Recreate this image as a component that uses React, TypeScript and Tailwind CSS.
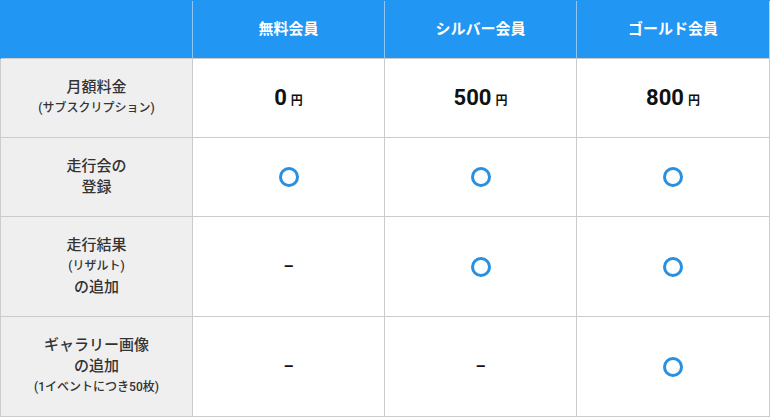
import React from "react";

const font = { fontFamily: 'Roboto, "Noto Sans CJK JP", sans-serif' };

function Circle() {
  return <div className="w-[20px] h-[20px] rounded-full border-[3px] border-[#2790e3]" />;
}

function Dash() {
  return <span className="text-[16px] font-bold text-[#111] leading-none">–</span>;
}

function Price({ v }: { v: string }) {
  return (
    <div className="flex items-baseline font-bold text-[#111]">
      <span className="text-[22px] leading-none">{v}</span>
      <span className="text-[12px] leading-none ml-[4px]">円</span>
    </div>
  );
}

type Row = { h: string; label: React.ReactNode; cells: React.ReactNode[] };

export default function App() {
  const rows: Row[] = [
    {
      h: "h-[79px]",
      label: (
        <>
          <div className="text-[15px]">月額料金</div>
          <div className="text-[12px]">(サブスクリプション)</div>
        </>
      ),
      cells: [<Price v="0" />, <Price v="500" />, <Price v="800" />],
    },
    {
      h: "h-[79px]",
      label: (
        <>
          <div className="text-[15px]">走行会の</div>
          <div className="text-[15px]">登録</div>
        </>
      ),
      cells: [<Circle />, <Circle />, <Circle />],
    },
    {
      h: "h-[100px]",
      label: (
        <>
          <div className="text-[15px]">走行結果</div>
          <div className="text-[12px]">(リザルト)</div>
          <div className="text-[15px]">の追加</div>
        </>
      ),
      cells: [<Dash />, <Circle />, <Circle />],
    },
    {
      h: "h-[100px]",
      label: (
        <>
          <div className="text-[15px]">ギャラリー画像</div>
          <div className="text-[15px]">の追加</div>
          <div className="text-[12px]">(1イベントにつき50枚)</div>
        </>
      ),
      cells: [<Dash />, <Dash />, <Circle />],
    },
  ];
  const widths = ["w-[192px]", "w-[192px]", "w-[192px]", "w-[193px]"];
  return (
    <div className="w-[770px] bg-white" style={font}>
      <div className="flex border-t border-l border-t-[#2196f3] border-l-[#2196f3] bg-[#2196f3] h-[59px]">
        {["", "無料会員", "シルバー会員", "ゴールド会員"].map((t, i) => (
          <div
            key={i}
            className={`${widths[i]} h-full flex items-center justify-center border-b border-b-[#cccccc] ${i < 3 ? "border-r border-r-[#8ec7f6]" : "border-r border-r-[#cccccc]"} text-white font-bold text-[15px]`}
          >
            {t}
          </div>
        ))}
      </div>
      {rows.map((r, ri) => (
        <div key={ri} className={`flex border-l border-l-[#cccccc] ${r.h}`}>
          <div className={`${widths[0]} h-full bg-[#efefef] border-r border-b border-[#cccccc] flex flex-col items-center justify-center text-[#333] font-medium leading-[21px]`}>
            {r.label}
          </div>
          {r.cells.map((c, ci) => (
            <div key={ci} className={`${widths[ci + 1]} h-full border-r border-b border-[#cccccc] flex items-center justify-center`}>
              {c}
            </div>
          ))}
        </div>
      ))}
    </div>
  );
}
